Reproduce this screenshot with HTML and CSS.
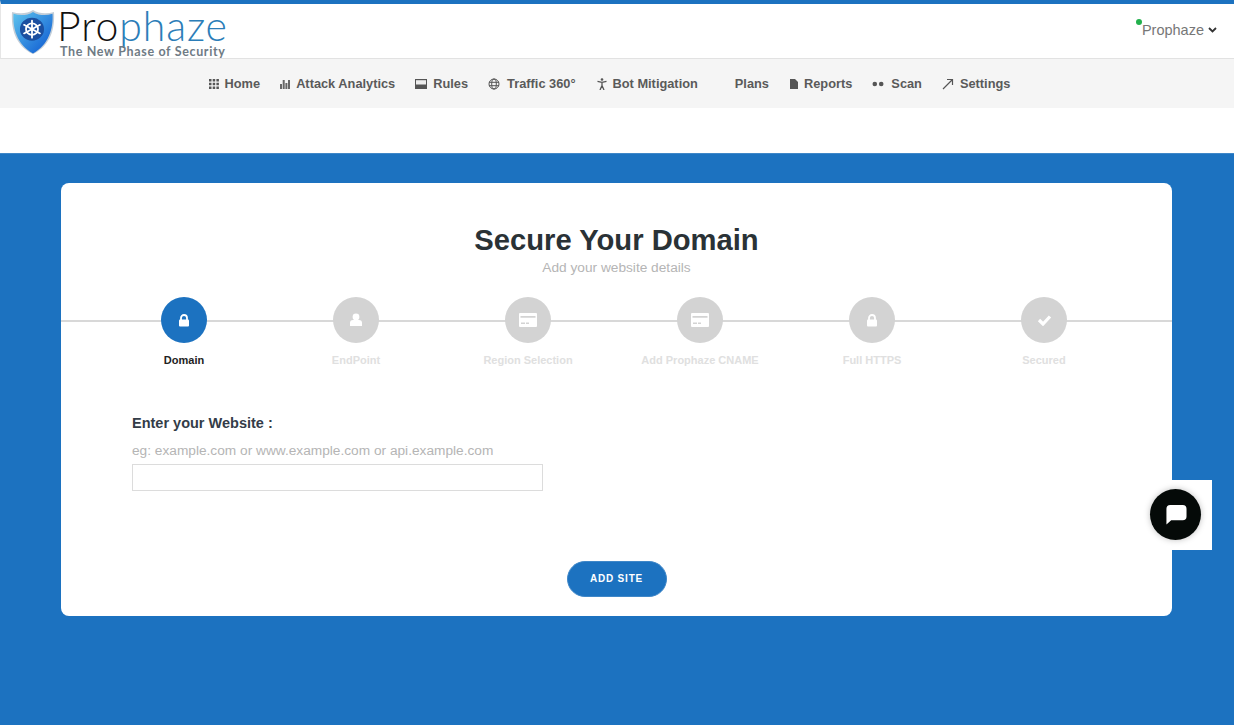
FILE: index.html
```html
<!DOCTYPE html>
<html lang="en">
<head>
<meta charset="utf-8">
<title>Prophaze</title>
<link rel="stylesheet" href="styles.css">
</head>
<body>
<header class="topbar">
  <div class="logo">
    <svg class="shield" width="44" height="46" viewBox="0 0 44 48" preserveAspectRatio="none">
      <defs>
        <linearGradient id="sg" x1="0" y1="0" x2="1" y2="1"><stop offset="0" stop-color="#5ec4ee"/><stop offset="1" stop-color="#0a55d0"/></linearGradient>
      </defs>
      <path d="M1 3 C8 5 16 5 22 1 C28 5 36 5 43 3 C44 20 40 38 22 47 C4 38 0 20 1 3Z" fill="#c3ced8"/>
      <path d="M2.500 5 C9 7 16 7 22 3 C28 7 35 7 41.500 5 C42.500 20 38 37 22 46.500 C6 37 1.500 20 2.500 5Z" fill="url(#sg)"/>
      <circle cx="21" cy="21" r="12" fill="#1b4fa0"/>
      <g stroke="#fff" stroke-width="1.800" fill="none" stroke-linecap="round">
        <circle cx="21" cy="21" r="6"/>
        <path d="M21 12V30M13 16.500L29 25.500M13 25.500L29 16.500"/>
      </g>
    </svg>
    <div class="wordmark">
      <div class="brand">Pro<span class="brand-blue">phaze</span></div>
      <div class="tagline">The New Phase of Security</div>
    </div>
  </div>
  <div class="user"><span class="dot"></span><span>Prophaze</span>
    <svg width="9" height="6" viewBox="0 0 9 6"><path d="M1 1L4.500 4.500L8 1" fill="none" stroke="#333" stroke-width="1.800"/></svg>
  </div>
</header>

<nav class="nav">
  <a class="nav-item"><svg class="ic" viewBox="0 0 10 10"><path fill="#555" d="M0 0h2.500v2.500H0zM3.700 0h2.500v2.500H3.700zM7.400 0h2.500v2.500H7.400zM0 3.700h2.500v2.500H0zM3.700 3.700h2.500v2.500H3.700zM7.400 3.700h2.500v2.500H7.400zM0 7.400h2.500v2.500H0zM3.700 7.400h2.500v2.500H3.700zM7.400 7.400h2.500v2.500H7.400z"/></svg>Home</a>
  <a class="nav-item"><svg class="ic" viewBox="0 0 10 10"><path fill="#666" d="M0 5h2v5H0zM2.700 1h2v9H2.700zM5.400 4h2v6H5.400zM8 1h2v9H8z"/></svg>Attack Analytics</a>
  <a class="nav-item"><svg class="ic ic-wide" viewBox="0 0 12 12"><path fill="#555" d="M0 1h12v10H0z"/><path fill="#eee" d="M1 2.200h10v4.300H1z"/></svg>Rules</a>
  <a class="nav-item nav-roomy"><svg class="ic ic-wide" viewBox="0 0 12 12"><g fill="none" stroke="#555" stroke-width="1"><circle cx="6" cy="6" r="5"/><ellipse cx="6" cy="6" rx="2.300" ry="5"/><path d="M1 4.300h10M1 7.700h10"/></g></svg>Traffic 360°</a>
  <a class="nav-item nav-bot"><svg class="ic ic-wide ic-bot" viewBox="0 0 12 12"><circle cx="6" cy="1.500" r="1.300" fill="#555"/><path d="M1.500 3.300L6 4.400L10.500 3.300M6 4.400V7.500M6 7.500L4 12M6 7.500L8 12" fill="none" stroke="#555" stroke-width="1.300"/></svg>Bot Mitigation</a>
  <a class="nav-item">Plans</a>
  <a class="nav-item nav-reports"><svg class="ic ic-doc" viewBox="0 0 8 10"><path fill="#555" d="M0 0h5l3 3v7H0z"/></svg>Reports</a>
  <a class="nav-item nav-roomy"><svg class="ic ic-wide" viewBox="0 0 12 12"><circle cx="2.800" cy="6" r="2.300" fill="#555"/><circle cx="9.200" cy="6" r="2.300" fill="#555"/></svg>Scan</a>
  <a class="nav-item"><svg class="ic ic-wide" viewBox="0 0 12 12"><path d="M1 11L10 2M5 1.500H10.500V7" fill="none" stroke="#555" stroke-width="1.200"/></svg>Settings</a>
</nav>

<main class="stage">
  <section class="card">
    <h1 class="title">Secure Your Domain</h1>
    <p class="subtitle">Add your website details</p>

    <div class="stepper">
      <div class="step step-active">
        <div class="bubble"><svg width="12" height="13" viewBox="0 0 12 13"><path d="M3 6V4a3 3 0 0 1 6 0v2" fill="none" stroke="#fff" stroke-width="1.800"/><rect x="1" y="5.500" width="10" height="7" rx="1" fill="#fff"/></svg></div>
        <div class="step-label">Domain</div>
      </div>
      <div class="step">
        <div class="bubble"><svg width="14" height="14" viewBox="0 0 14 14"><circle cx="7" cy="4" r="3.400" fill="#fff"/><path d="M1 13V10a3 3 0 0 1 3-3h6a3 3 0 0 1 3 3v3z" fill="#fff"/></svg></div>
        <div class="step-label">EndPoint</div>
      </div>
      <div class="step">
        <div class="bubble"><svg width="18" height="14" viewBox="0 0 18 14"><path fill="#fff" d="M1 0h16a1 1 0 0 1 1 1v12a1 1 0 0 1-1 1H1a1 1 0 0 1-1-1V1a1 1 0 0 1 1-1z"/><path fill="#d3d3d3" d="M1.500 3h15v1.800h-15zM2 9.500h4v1.500H2zM7 9.500h3v1.500H7z"/></svg></div>
        <div class="step-label">Region Selection</div>
      </div>
      <div class="step">
        <div class="bubble"><svg width="18" height="14" viewBox="0 0 18 14"><path fill="#fff" d="M1 0h16a1 1 0 0 1 1 1v12a1 1 0 0 1-1 1H1a1 1 0 0 1-1-1V1a1 1 0 0 1 1-1z"/><path fill="#d3d3d3" d="M1.500 3h15v1.800h-15zM2 9.500h4v1.500H2zM7 9.500h3v1.500H7z"/></svg></div>
        <div class="step-label">Add Prophaze CNAME</div>
      </div>
      <div class="step">
        <div class="bubble"><svg width="12" height="13" viewBox="0 0 12 13"><path d="M3 6V4a3 3 0 0 1 6 0v2" fill="none" stroke="#fff" stroke-width="1.800"/><rect x="1" y="5.500" width="10" height="7" rx="1" fill="#fff"/></svg></div>
        <div class="step-label">Full HTTPS</div>
      </div>
      <div class="step">
        <div class="bubble"><svg width="15" height="12" viewBox="0 0 15 12"><path d="M2 6L6 10L13 2.500" fill="none" stroke="#fff" stroke-width="3.200"/></svg></div>
        <div class="step-label">Secured</div>
      </div>
    </div>

    <form class="site-form">
      <label class="field-label" for="site">Enter your Website :</label>
      <p class="hint">eg: example.com or www.example.com or api.example.com</p>
      <input class="field" id="site" type="text">
      <div class="actions"><button class="add-btn" type="button">ADD SITE</button></div>
    </form>
  </section>

  <div class="chat">
    <div class="chat-btn">
      <svg width="24" height="22" viewBox="0 0 24 23"><path fill="#fff" d="M6 1h13a4 4 0 0 1 4 4v8a4 4 0 0 1-4 4H7l-5 4.500 0-4.500V5a4 4 0 0 1 4-4z"/></svg>
    </div>
  </div>
</main>
</body>
</html>
```
FILE: styles.css
```css
* { box-sizing: border-box; }
html, body { margin: 0; height: 100%; }
body {
  width: 1234px;
  height: 725px;
  overflow: hidden;
  font-family: "Liberation Sans", Arial, sans-serif;
  background: #fff;
  display: flex;
  flex-direction: column;
}

.topbar {
  height: 59px;
  flex: none;
  border-top: 4px solid #1c72c0;
  border-bottom: 1px solid #e2e2e2;
  border-left: 1px solid #e6e6e6;
  display: flex;
  justify-content: space-between;
  background: #fff;
}
.logo {
  display: flex;
  align-items: flex-start;
  padding: 3px 0 0 10px;
}
.shield { flex: none; margin-top: 2px; }
.wordmark { margin-left: 2px; }
.brand {
  font-family: Lato, "Liberation Sans", sans-serif;
  font-weight: 300;
  font-size: 41px;
  line-height: 38px;
  color: #111;
  letter-spacing: 0.9px;
}
.brand-blue { color: #2b7db8; }
.tagline {
  font-family: Lato, "Open Sans", sans-serif;
  font-size: 12.500px;
  line-height: 13px;
  font-weight: 700;
  color: #6f7b85;
  letter-spacing: 0.65px;
  margin: 0 0 0 3px;
}
.user {
  display: flex;
  align-items: center;
  gap: 4px;
  height: 52px;
  padding-right: 17px;
  font-size: 14.500px;
  color: #777;
  position: relative;
}
.dot {
  position: absolute;
  left: -6px;
  top: 15px;
  width: 6px;
  height: 6px;
  border-radius: 50%;
  background: #22b04c;
}

.nav {
  height: 49px;
  flex: none;
  background: #f5f5f5;
  display: flex;
  justify-content: center;
  align-items: center;
  padding: 0 15px 0 0;
  gap: 20px;
}
.nav-item {
  display: flex;
  align-items: center;
  gap: 6px;
  font-size: 12.800px;
  font-weight: 700;
  color: #5a5a5a;
  white-space: nowrap;
}
.nav-roomy { gap: 7px; }
.nav-bot { margin-right: 17px; gap: 5px; }
.nav-reports { margin-left: 1px; }
.ic { width: 10px; height: 10px; flex: none; }
.ic-wide { width: 12px; height: 12px; }
.ic-doc { width: 8px; height: 10px; }

.stage {
  margin-top: 45px;
  flex: 1;
  background: #1c72c0;
  border-top: 1px solid #3f87c8;
  padding: 29px 62px 0 61px;
  position: relative;
}
.card {
  height: 433px;
  background: #fff;
  border-radius: 8px;
  padding-top: 40px;
}
.title {
  margin: 0;
  text-align: center;
  font-size: 29.200px;
  line-height: 35px;
  font-weight: 700;
  color: #2a3236;
}
.subtitle {
  margin: 2px 0 0;
  text-align: center;
  font-size: 13.700px;
  line-height: 16px;
  color: #b5b5b5;
}

.stepper {
  margin-top: 21px;
  padding: 0 37px;
  display: flex;
  position: relative;
}
.stepper::before {
  content: "";
  position: absolute;
  left: 0;
  right: 0;
  top: 23px;
  height: 2px;
  background: #d8d8d8;
}
.step {
  width: 172px;
  display: flex;
  flex-direction: column;
  align-items: center;
  position: relative;
}
.bubble {
  width: 46px;
  height: 46px;
  border-radius: 50%;
  background: #d3d3d3;
  display: flex;
  align-items: center;
  justify-content: center;
}
.step-active .bubble { background: #1c72c0; }
.step-label {
  margin-top: 10px;
  font-size: 11px;
  line-height: 14px;
  font-weight: 700;
  color: #e0e0e0;
  white-space: nowrap;
}
.step-active .step-label { color: #222; }

.site-form { padding: 47px 0 0 71px; display: flex; flex-direction: column; }
.field-label {
  font-size: 14.500px;
  line-height: 18px;
  font-weight: 700;
  color: #333c48;
}
.hint {
  margin: 10px 0 4px;
  font-size: 13.700px;
  line-height: 18px;
  color: #b5b5b5;
}
.field {
  width: 411px;
  height: 27px;
  border: 1px solid #dcdcdc;
  background: #fff;
  padding: 0 6px;
  outline: none;
}
.actions { margin: 70px 0 0 -71px; display: flex; justify-content: center; }
.add-btn {
  width: 100px;
  height: 36px;
  border: 1px solid #3f87c8;
  border-radius: 18px;
  background: #1c72c0;
  color: #fff;
  font-family: "Liberation Sans", Arial, sans-serif;
  font-size: 10px;
  font-weight: 700;
  letter-spacing: 0.8px;
  padding: 0 0 2px;
}

.chat {
  position: absolute;
  left: 1143px;
  top: 326px;
  width: 69px;
  height: 70px;
  background: #fff;
}
.chat-btn {
  position: absolute;
  left: 7px;
  top: 9px;
  width: 51px;
  height: 51px;
  border-radius: 50%;
  background: #050a08;
  box-shadow: 0 0 6px rgba(0,0,0,.25);
  display: flex;
  align-items: center;
  justify-content: center;
}
```
